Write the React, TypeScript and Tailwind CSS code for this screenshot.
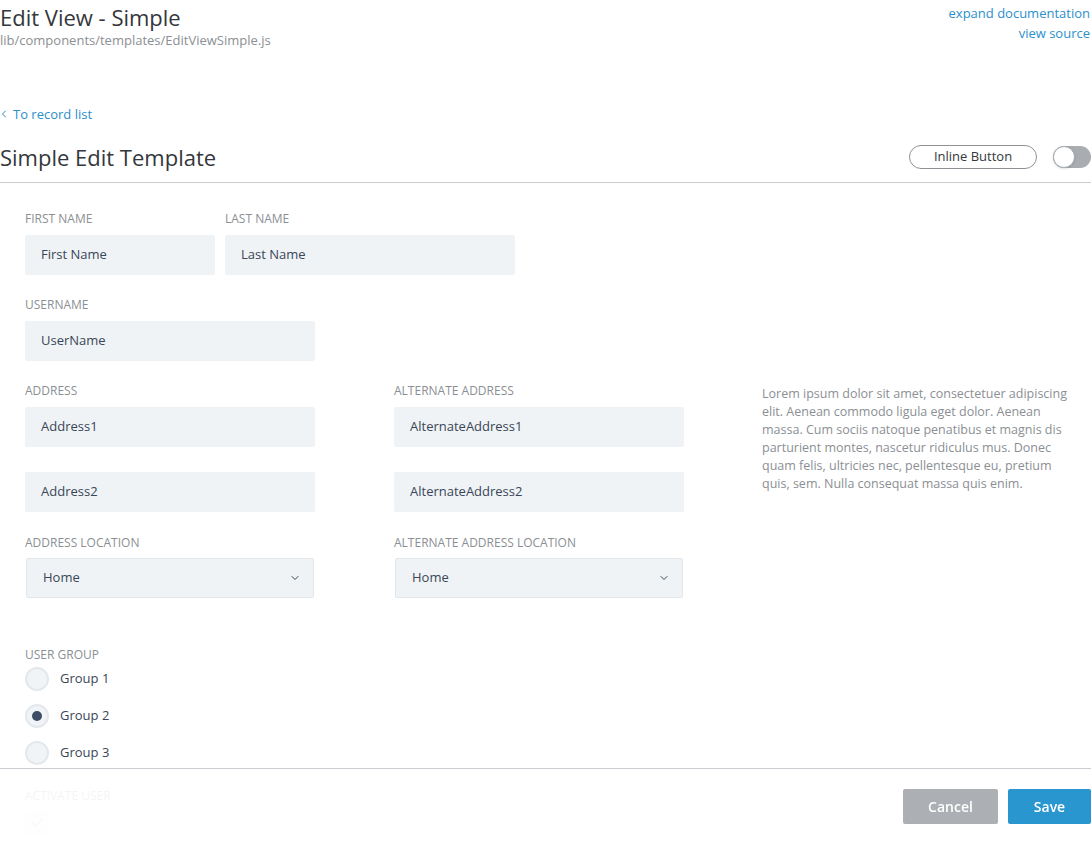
import { ChevronDown, ChevronLeft, Check } from "lucide-react";

const font = { fontFamily: "'Open Sans', 'Liberation Sans', sans-serif" };

function Label({ children }: { children: string }) {
  return (
    <div className="text-[12px] uppercase text-[#8b8f94] leading-none mb-[10px]">
      {children}
    </div>
  );
}

function Field({ value, width }: { value: string; width: string }) {
  return (
    <div
      className={`${width} h-[40px] bg-[#eff3f6] rounded-[2px] flex items-center px-4 text-[13px] text-[#3a4657]`}
    >
      {value}
    </div>
  );
}

function Select({ value }: { value: string }) {
  return (
    <div className="w-[288px] ml-px h-[40px] bg-[#eff3f6] border border-[#e2e7eb] rounded-[2px] flex items-center justify-between pl-4 pr-3 text-[13px] text-[#3a4657]">
      <span>{value}</span>
      <ChevronDown size={12} strokeWidth={2} className="text-[#3a4657]" />
    </div>
  );
}

function Radio({ label, checked }: { label: string; checked?: boolean }) {
  return (
    <div className="flex items-center h-[24px]">
      <div className="w-[24px] h-[24px] rounded-full bg-[#f0f4f7] border-2 border-[#e3e8ec] flex items-center justify-center">
        {checked && <div className="w-[10px] h-[10px] rounded-full bg-[#3d4d66]" />}
      </div>
      <span className="ml-[11px] text-[13px] text-[#3a4657]">{label}</span>
    </div>
  );
}

export default function App() {
  return (
    <div className="min-h-screen bg-white relative" style={font}>
      {/* header */}
      <div className="flex justify-between">
        <div>
          <h1 className="text-[22px] leading-[26px] text-[#34373b] pt-[4px]">Edit View - Simple</h1>
          <div className="text-[13px] text-[#8b8f94] leading-[16px] mt-[2px]">
            lib/components/templates/EditViewSimple.js
          </div>
        </div>
        <div className="text-right text-[13px] text-[#2b8fcb] leading-[20px] pt-[3px] pr-px">
          <div>expand documentation</div>
          <div>view source</div>
        </div>
      </div>

      <div className="mt-[58px] flex items-center text-[13px] text-[#2b8fcb] leading-[16px]">
        <ChevronLeft size={12} strokeWidth={2} className="-ml-[2px] mr-[3px]" />
        To record list
      </div>

      <div className="mt-[22px] flex items-center justify-between border-b border-[#c9ccd1] pb-[12px]">
        <h2 className="text-[22px] leading-[26px] text-[#34373b]">Simple Edit Template</h2>
        <div className="flex items-center gap-4">
          <button className="w-[128px] h-[24px] rounded-full border border-[#8e9297] text-[13px] text-[#34373b]">
            Inline Button
          </button>
          <div className="w-[38px] h-[22px] rounded-full bg-[#a9adb1] relative">
            <div className="absolute left-0 top-0 w-[22px] h-[22px] rounded-full bg-white border border-[#a9adb1] shadow-sm" />
          </div>
        </div>
      </div>

      {/* form */}
      <div className="pl-[25px] pt-[30px] pb-[40px] grid grid-cols-[369px_368px_1fr]">
        <div className="col-span-2">
          <div className="flex gap-[10px]">
            <div>
              <Label>First Name</Label>
              <Field value="First Name" width="w-[190px]" />
            </div>
            <div>
              <Label>Last Name</Label>
              <Field value="Last Name" width="w-[290px]" />
            </div>
          </div>

          <div className="mt-[24px]">
            <Label>Username</Label>
            <Field value="UserName" width="w-[290px]" />
          </div>

          <div className="mt-[24px] grid grid-cols-[369px_1fr]">
            <div>
              <Label>Address</Label>
              <Field value="Address1" width="w-[290px]" />
              <div className="mt-[25px]">
                <Field value="Address2" width="w-[290px]" />
              </div>
              <div className="mt-[25px]">
                <div className="text-[12px] uppercase text-[#8b8f94] leading-none mb-[9px]">Address Location</div>
                <Select value="Home" />
              </div>
            </div>
            <div>
              <Label>Alternate Address</Label>
              <Field value="AlternateAddress1" width="w-[290px]" />
              <div className="mt-[25px]">
                <Field value="AlternateAddress2" width="w-[290px]" />
              </div>
              <div className="mt-[25px]">
                <div className="text-[12px] uppercase text-[#8b8f94] leading-none mb-[9px]">Alternate Address Location</div>
                <Select value="Home" />
              </div>
            </div>
          </div>

          <div className="mt-[51px]">
            <div className="text-[12px] uppercase text-[#8b8f94] leading-none mb-[6px]">User Group</div>
            <div className="flex flex-col gap-[13px]">
              <Radio label="Group 1" />
              <Radio label="Group 2" checked />
              <Radio label="Group 3" />
            </div>
          </div>

          <div className="mt-[25px]">
            <div className="text-[12px] uppercase text-[#8b8f94] leading-none mb-[9px]">Activate User</div>
            <div className="w-[24px] h-[24px] rounded-[2px] bg-[#eff3f6] flex items-center justify-center">
              <Check size={14} strokeWidth={3} className="text-[#b4bcc5]" />
            </div>
          </div>
        </div>

        <div className="pt-[172px] pr-[10px] text-[12.5px] leading-[18px] text-[#8b8f94]">
          Lorem ipsum dolor sit amet, consectetuer adipiscing elit. Aenean commodo ligula eget dolor.
          Aenean massa. Cum sociis natoque penatibus et magnis dis parturient montes, nascetur ridiculus
          mus. Donec quam felis, ultricies nec, pellentesque eu, pretium quis, sem. Nulla consequat massa
          quis enim.
        </div>
      </div>

      {/* footer overlay */}
      <div className="fixed bottom-0 left-0 right-0 h-[77px] bg-white/90 border-t border-[#c9ccd1] flex justify-end items-start pt-[20px] gap-[10px]">
        <button className="w-[95px] h-[35px] rounded-[2px] bg-[#acb0b4] text-white text-[14px] font-semibold">
          Cancel
        </button>
        <button className="w-[83px] h-[35px] rounded-[2px] bg-[#2a96cf] text-white text-[14px] font-semibold">
          Save
        </button>
      </div>
    </div>
  );
}
